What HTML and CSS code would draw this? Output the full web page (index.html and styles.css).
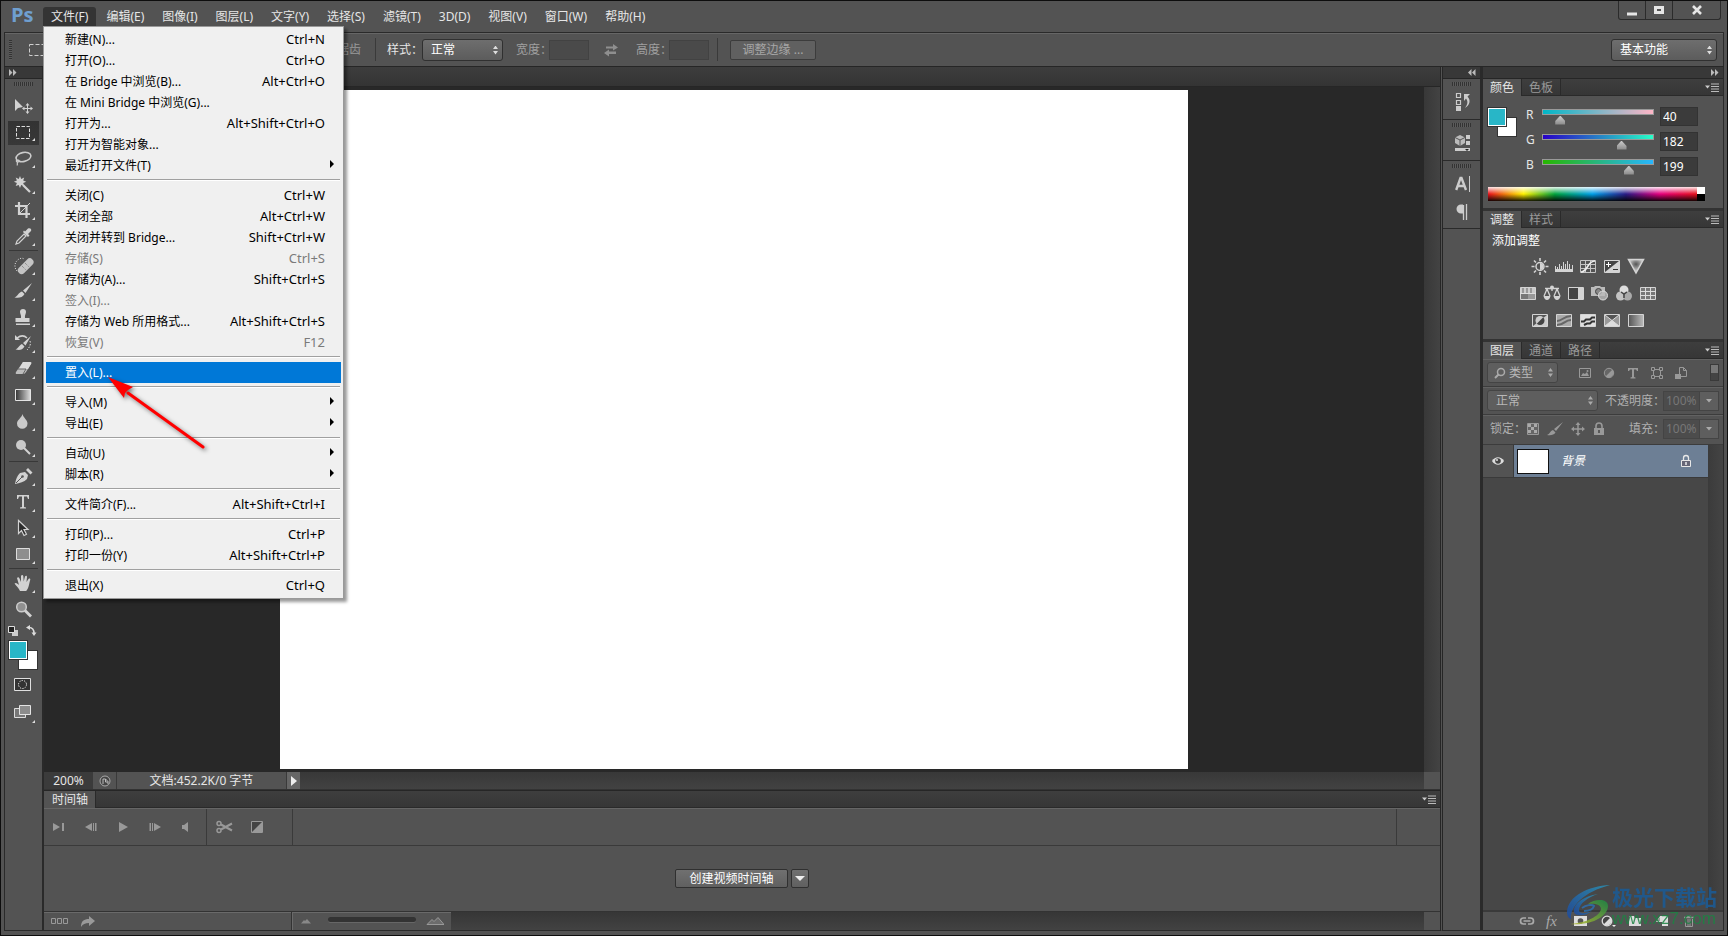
FILE: index.html
```html
<!DOCTYPE html>
<html lang="zh-CN">
<head>
<meta charset="utf-8">
<title>Ps</title>
<link rel="stylesheet" href="styles.css">
</head>
<body>
<div class="app">
  <header class="menubar">
    <span class="logo">Ps</span>
    <nav class="menus">
      <button class="menu-btn open">文件(F)</button>
      <button class="menu-btn">编辑(E)</button>
      <button class="menu-btn">图像(I)</button>
      <button class="menu-btn">图层(L)</button>
      <button class="menu-btn">文字(Y)</button>
      <button class="menu-btn">选择(S)</button>
      <button class="menu-btn">滤镜(T)</button>
      <button class="menu-btn">3D(D)</button>
      <button class="menu-btn">视图(V)</button>
      <button class="menu-btn">窗口(W)</button>
      <button class="menu-btn">帮助(H)</button>
    </nav>
    <div class="win-btns">
      <button class="win-btn" aria-label="最小化"><svg width="12" height="12"><path d="M1 8.500h10v3H1z" fill="#e6e6e6"/></svg></button>
      <button class="win-btn" aria-label="最大化"><svg width="12" height="12"><path d="M2.500 3.500h7v5h-7z" fill="none" stroke="#e6e6e6" stroke-width="3"/></svg></button>
      <button class="win-btn close" aria-label="关闭"><svg width="12" height="12"><path d="M2 2l8 8M10 2l-8 8" stroke="#e6e6e6" stroke-width="2.600"/></svg></button>
    </div>
  </header>

  <section class="options">
    <div class="opt-left">
      <i class="grip-v"></i>
      <svg width="18" height="14"><path d="M1.500 1.500h14v11h-14z" fill="none" stroke="#d0d0d0" stroke-dasharray="4 2"/></svg>
      <span class="opt-end">锯齿</span>
    </div>
    <i class="vline"></i>
    <label for="style">样式：</label>
    <span class="sel sel-style"><select id="style"><option>正常</option></select></span>
    <label class="dim" for="w">宽度：</label>
    <input class="num" id="w" disabled>
    <svg class="swap" width="16" height="14"><path d="M3 3.500h7V1l5 3.500-5 3V5.500H3zM13 8.500H6V6.500l-5 3.500 5 3.500v-2.500h7z" fill="#8f8f8f"/></svg>
    <label class="dim" for="h">高度：</label>
    <input class="num" id="h" disabled>
    <i class="vline"></i>
    <button class="refine" disabled>调整边缘 ...</button>
    <span class="sel sel-work"><select aria-label="工作区"><option>基本功能</option></select></span>
  </section>

  <div class="main">
    <aside class="tools">
      <div class="strip-head left"><svg width="8" height="7"><path d="M0 0l3.500 3.500L0 7zM4 0l3.500 3.500L4 7z" fill="#bbb"/></svg></div>
      <i class="grip-h"></i>
      <button class="tool" aria-label="移动"><svg viewBox="0 0 38 26"><path d="M10 6v12l3-3 5-1z" fill="#d2d2d2"/><path d="M22.500 11v9M18 15.500h9" stroke="#d2d2d2"/><path d="M22.500 10l2 2.500h-4zM22.500 21l2-2.500h-4zM17 15.500l2.500-2v4zM28 15.500l-2.500-2v4z" fill="#d2d2d2"/></svg></button>
      <button class="tool on" aria-label="矩形选框"><svg viewBox="0 0 38 26"><path d="M11.500 7.500h13v12h-13z" fill="none" stroke="#ddd" stroke-dasharray="3.500 1.500"/><path d="M30 19v3h-3z" fill="#ddd"/></svg></button>
      <button class="tool" aria-label="套索"><svg viewBox="0 0 38 26"><ellipse cx="18.500" cy="12" rx="7.500" ry="4.500" transform="rotate(-12 18.500 12)" fill="none" stroke="#ccc" stroke-width="1.600"/><path d="M12 14.500c-2 2 1 3.500 2 2s-2-2-2-.5 1 3 0 4.500" fill="none" stroke="#ccc" stroke-width="1.200"/><path d="M30 20v3h-3z" fill="#ddd"/></svg></button>
      <button class="tool" aria-label="魔棒"><svg viewBox="0 0 38 26"><path d="M15 5l1.200 3 3-1.500-1 3 3 1.200-3 1.200 1 3-3-1-1.200 3-1.300-3-3 1 1.200-3-3-1.200 3-1.200-1.200-3 3 1.500z" fill="#d2d2d2"/><path d="M18 14l7 7" stroke="#d2d2d2" stroke-width="2.200"/><path d="M30 20v3h-3z" fill="#ddd"/></svg></button>
      <button class="tool" aria-label="裁剪"><svg viewBox="0 0 38 26"><path d="M14 5v12h11M10 9h11.500v12" fill="none" stroke="#d2d2d2" stroke-width="2.200"/><path d="M14 17L25 6" stroke="#d2d2d2"/><path d="M30 20v3h-3z" fill="#ddd"/></svg></button>
      <button class="tool" aria-label="吸管"><svg viewBox="0 0 38 26"><path d="M11 21l1-3 7-7 2 2-7 7z" fill="none" stroke="#d2d2d2" stroke-width="1.200"/><path d="M18 9l5 5 1.500-1.500L23 11l3-3c1-2-1-3.500-3-2.500l-3 3-1-1z" fill="#d2d2d2"/><path d="M30 20v3h-3z" fill="#ddd"/></svg></button>
      <hr>
      <button class="tool" aria-label="修复画笔"><svg viewBox="0 0 38 26"><path d="M12 19c-3-3-3-9 2-12 2-1 4-1 5 0" fill="none" stroke="#ddd" stroke-dasharray="1 1.500"/><rect x="11" y="10.500" width="19" height="7.500" rx="3.700" transform="rotate(-45 20.500 14)" fill="#c4c4c4"/><path d="M17 14l4 4M20 11l4 4" stroke="#777" stroke-dasharray="1 1"/><path d="M30 20v3h-3z" fill="#ddd"/></svg></button>
      <button class="tool" aria-label="画笔"><svg viewBox="0 0 38 26"><path d="M27 5l-9 7.500 2.500 2.500zM17 13.500l2.500 2.500c-2 4-6 4-10 3.500 3-1 4-5 7.500-6z" fill="#d2d2d2"/><path d="M30 20v3h-3z" fill="#ddd"/></svg></button>
      <button class="tool" aria-label="图章"><svg viewBox="0 0 38 26"><path d="M15 8a3 3 0 0 1 6 0c0 2-1.500 3-1 6h4.500v4h-14v-4H16c.5-3-1-4-1-6zM11 19.500h14v1.500H11z" fill="#d2d2d2"/><path d="M30 20v3h-3z" fill="#ddd"/></svg></button>
      <button class="tool" aria-label="历史画笔"><svg viewBox="0 0 38 26"><path d="M26 6l-8 7 2.500 2.500zM17 14l2.500 2.500c-2 3.500-5 4-9 3 3-1 3.500-4.500 6.500-5.500z" fill="#d2d2d2"/><path d="M12 8c4-3 7-3 10 0" fill="none" stroke="#d2d2d2" stroke-width="1.500"/><path d="M10 5v5h5z" fill="#d2d2d2"/><path d="M25 11c1 3 0 6-3 9" fill="none" stroke="#ddd" stroke-dasharray="1.500 1.500"/><path d="M30 20v3h-3z" fill="#ddd"/></svg></button>
      <button class="tool" aria-label="橡皮擦"><svg viewBox="0 0 38 26"><path d="M18 6h7q2 0 1 2l-5 8q-1 2-3 2h-6q-2 0-1-2z" fill="#bdbdbd"/><path d="M18 6h7q2 0 1 2l-3 5h-9z" fill="#dcdcdc"/><path d="M13 13h8l-3 5" fill="none" stroke="#666"/><path d="M30 20v3h-3z" fill="#ddd"/></svg></button>
      <button class="tool" aria-label="渐变"><svg viewBox="0 0 38 26"><defs><linearGradient id="g1"><stop stop-color="#333"/><stop offset="1" stop-color="#ddd"/></linearGradient></defs><path d="M10.500 7.500h15v11h-15z" fill="url(#g1)" stroke="#e4e4e4"/><path d="M30 20v3h-3z" fill="#ddd"/></svg></button>
      <button class="tool" aria-label="模糊"><svg viewBox="0 0 38 26"><path d="M17.500 6c1 4 5 6 5 9.500a5 5 0 0 1-10.500 0c0-3.500 4.500-5.500 5.500-9.500z" fill="#cacaca"/><path d="M30 20v3h-3z" fill="#ddd"/></svg></button>
      <button class="tool" aria-label="减淡"><svg viewBox="0 0 38 26"><circle cx="16" cy="11" r="5" fill="#cacaca"/><path d="M19 14l6 6" stroke="#d2d2d2" stroke-width="2"/><path d="M30 20v3h-3z" fill="#ddd"/></svg></button>
      <hr>
      <button class="tool" aria-label="钢笔"><svg viewBox="0 0 38 26"><path d="M10 21c1-5 2-8 5-11l5-1 3 3-1 4c-3 3-7 4-12 5zM21 7l2-2 4.500 4.500-2 2z" fill="#d2d2d2"/><path d="M11 20l6-6" stroke="#555"/><circle cx="17.500" cy="13.500" r="1.300" fill="#555"/><path d="M30 20v3h-3z" fill="#ddd"/></svg></button>
      <button class="tool" aria-label="文字"><svg viewBox="0 0 38 26"><path d="M12 6h12v4h-1l-1-2.500h-3V18l2 .5v1h-6v-1l2-.5V7.500h-3L13 10h-1z" fill="#d2d2d2"/><path d="M30 20v3h-3z" fill="#ddd"/></svg></button>
      <button class="tool" aria-label="路径选择"><svg viewBox="0 0 38 26"><path d="M13.500 5.500v13l3-3 2.500 5 2.500-1.200-2.500-4.800h4z" fill="#2c2c2c" stroke="#d2d2d2" stroke-width="1.200"/><path d="M30 20v3h-3z" fill="#ddd"/></svg></button>
      <button class="tool" aria-label="矩形"><svg viewBox="0 0 38 26"><path d="M11.500 7.500h13v11h-13z" fill="#8e8e8e" stroke="#ddd"/><path d="M30 20v3h-3z" fill="#ddd"/></svg></button>
      <hr>
      <button class="tool" aria-label="抓手"><svg viewBox="0 0 38 26"><path d="M15 21c-1-3-4-5-5.500-7.500 1.500-1.500 3 0 4.500 1.500L12 8c1-1.500 2-.8 2.500.5L16 12V6c.5-1.500 2-1.500 2.300 0l.4 5.500 1.300-5c.7-1.300 2-1 2 .5L21.500 12l2-3c1-1 2.200-.3 1.700 1-1 3-1.200 8-4 11z" fill="#d2d2d2"/><path d="M30 20v3h-3z" fill="#ddd"/></svg></button>
      <button class="tool" aria-label="缩放"><svg viewBox="0 0 38 26"><circle cx="16.500" cy="11" r="4.800" fill="#909090" stroke="#ccc" stroke-width="1.500"/><path d="M20 14.500l6 6" stroke="#d2d2d2" stroke-width="2.800"/></svg></button>
      <svg class="mini" width="38" height="16"><path d="M7 6h6v6H7z" fill="#ccc"/><path d="M3.500 2.500h6v6h-6z" fill="#222" stroke="#ddd"/><path d="M24 3.500c4 0 5 2 5 6" fill="none" stroke="#ddd" stroke-width="1.500"/><path d="M25 1v5l-4-2.500zM26.500 8.500h5L29 12z" fill="#ddd"/></svg>
      <div class="swatches"><button class="bgc" aria-label="背景色"></button><button class="fgc" aria-label="前景色"></button></div>
      <button class="tool quick" aria-label="快速蒙版"><svg viewBox="0 0 38 26"><path d="M9.500 6.500h16v12h-16z" fill="#333" stroke="#e0e0e0"/><circle cx="17.500" cy="12.500" r="4" fill="none" stroke="#fff" stroke-dasharray="1.200 1.300"/></svg></button>
      <button class="tool" aria-label="屏幕模式"><svg viewBox="0 0 38 26"><path d="M9.500 8.500h11v9h-11z" fill="#777" stroke="#ddd"/><path d="M14.500 5.500h11v9h-11z" fill="#8c8c8c" stroke="#e4e4e4"/><path d="M30 20v3h-3z" fill="#ddd"/></svg></button>
    </aside>

    <main class="doc">
      <div class="doc-tabs"></div>
      <div class="stage">
        <div class="pasteboard"><div class="canvas"></div></div>
        <div class="vscroll"></div>
      </div>
      <div class="status">
        <span class="zoom">200%</span>
        <span class="st-icon"><svg width="12" height="12"><circle cx="6" cy="6" r="5" fill="#444" stroke="#aaa"/><path d="M4 9V4h2.500L9 6.500V9M6.500 4v3H9" fill="none" stroke="#bbb"/></svg></span>
        <span class="info">文档:452.2K/0 字节</span>
        <button class="st-play" aria-label="选项"><svg width="8" height="10"><path d="M1 0l6 5-6 5z" fill="#eee"/></svg></button>
        <span class="hscroll"></span>
        <span class="corner"></span>
      </div>
      <section class="timeline">
        <div class="tabs"><button class="tab on">时间轴</button><svg class="pmenu" width="14" height="9"><path d="M0 2.500h5l-2.500 3z" fill="#ccc"/><path d="M6 1h8M6 3.500h8M6 6h8M6 8.500h8" stroke="#bbb"/></svg></div>
        <div class="tl-bar">
          <div class="tl-play">
            <button aria-label="首帧"><svg width="14" height="12"><path d="M1 2l7 4-7 4zM10 2h2v8h-2z"/></svg></button>
            <button aria-label="上一帧"><svg width="14" height="12"><path d="M8 2L1 6l7 4zM9 2h1v8H9zM11 2h1.500v8H11z"/></svg></button>
            <button aria-label="播放"><svg width="14" height="12"><path d="M3 1l9 5-9 5z"/></svg></button>
            <button aria-label="下一帧"><svg width="14" height="12"><path d="M6 2l7 4-7 4zM4 2h1v8H4zM1.500 2H3v8H1.500z"/></svg></button>
            <button aria-label="静音"><svg width="14" height="12"><path d="M2 4h2l4-3v10L4 8H2z"/></svg></button>
          </div>
          <div class="tl-cut">
            <button aria-label="拆分"><svg width="18" height="14"><circle cx="4" cy="3.500" r="2" fill="none" stroke="#999" stroke-width="1.500"/><circle cx="4" cy="10.500" r="2" fill="none" stroke="#999" stroke-width="1.500"/><path d="M6 4.500l11 6M6 9.500l11-6" stroke="#999" stroke-width="2"/></svg></button>
            <button aria-label="过渡"><svg width="14" height="14"><path d="M1.500 1.500h11v11h-11z" fill="#444" stroke="#999"/><path d="M12 2v10H2z"/></svg></button>
          </div>
          <div class="tl-space"></div>
          <div class="tl-end"></div>
        </div>
        <div class="tl-body"><button class="create">创建视频时间轴</button><button class="create arrow" aria-label="更多"><svg width="10" height="6"><path d="M0 0h10L5 5z" fill="#eee"/></svg></button></div>
        <div class="tl-foot">
          <div class="tf-left"><svg width="18" height="8"><path d="M.5 1.500h4v5h-4zM6.500 1.500h4v5h-4zM12.500 1.500h4v5h-4z" fill="none" stroke="#999"/></svg><svg width="14" height="12"><path d="M0 12c0-6 3-8 8-8V1l6 5-6 5V8C4 8 2 9 0 12z" fill="#999"/></svg></div>
          <div class="tf-zoom"><svg width="10" height="6"><path d="M0 5.500L3 2l1 1 2-2 4 4.500z" fill="#888"/></svg><i class="tf-track"></i><svg width="18" height="8"><path d="M1 7.500l5-5 2 2 4-4 6 7z" fill="#6c6c6c" stroke="#999"/></svg></div>
          <div class="tf-scroll"></div>
          <div class="tf-corner"></div>
        </div>
      </section>
    </main>

    <aside class="dock">
      <div class="strip-head right"><svg width="8" height="7"><path d="M3.500 0L0 3.500 3.500 7zM7.500 0L4 3.500 7.500 7z" fill="#bbb"/></svg></div>
      <div class="dock-group"><i class="grip-h"></i><button aria-label="历史记录"><svg width="18" height="20"><path d="M2.500 1.500h4v4h-4zM2.500 8.500h4v4h-4z" fill="none" stroke="#ccc" stroke-width="1.200"/><path d="M2 14h5v5H2z" fill="#ccc"/><path d="M10 2h6l-2.500 2.500C17 8 16 13 11 16c3-4 3-7 1-9.500L10 9z" fill="#ccc"/></svg></button></div>
      <div class="dock-group"><i class="grip-h"></i><button aria-label="属性"><svg width="18" height="20"><path d="M6 2l5 2.500v5.500L6 13l-5-3V4.500z" fill="#bbb"/><path d="M1 4.500L6 7l5-2.500M6 7v6" fill="none" stroke="#555"/><path d="M12 2h4v4h-4zM12 8h4v4h-4zM1 15h15v3H1z" fill="#ccc"/><path d="M11 16h4l-2 2z" fill="#222"/></svg></button></div>
      <div class="dock-group two"><i class="grip-h"></i><button aria-label="字符"><svg width="18" height="20"><path d="M2.200 16L6.500 4h1L12 16M4 12h6" fill="none" stroke="#ccc" stroke-width="2.400"/><path d="M15.500 2v16" stroke="#ccc"/></svg></button><button aria-label="段落"><svg width="18" height="20"><path d="M13 2.500H7a4.500 4.500 0 0 0 0 9h2V2.500" fill="#ccc"/><path d="M9.500 3v15M12.500 2v16" stroke="#ccc" stroke-width="1.300"/></svg></button></div>
    </aside>

    <aside class="panels">
      <div class="strip-head right"><svg width="8" height="7"><path d="M0 0l3.500 3.500L0 7zM4 0l3.500 3.500L4 7z" fill="#bbb"/></svg></div>
      <section class="panel">
        <div class="tabs"><button class="tab on">颜色</button><button class="tab">色板</button><svg class="pmenu" width="14" height="9"><path d="M0 2.500h5l-2.500 3z" fill="#ccc"/><path d="M6 1h8M6 3.500h8M6 6h8M6 8.500h8" stroke="#bbb"/></svg></div>
        <div class="color">
          <div class="color-top">
            <div class="swatches"><button class="bgc" aria-label="背景色"></button><button class="fgc" aria-label="前景色"></button></div>
            <div class="channels">
              <div class="ch"><label for="r">R</label><span class="bar bar-r"><input type="range" aria-label="R" min="0" max="255" value="40"></span><input class="val" id="r" value="40"></div>
              <div class="ch"><label for="g">G</label><span class="bar bar-g"><input type="range" aria-label="G" min="0" max="255" value="182"></span><input class="val" id="g" value="182"></div>
              <div class="ch"><label for="b">B</label><span class="bar bar-b"><input type="range" aria-label="B" min="0" max="255" value="199"></span><input class="val" id="b" value="199"></div>
            </div>
          </div>
          <div class="spectrum"><i class="hues"></i><i class="bw"></i></div>
        </div>
      </section>
      <section class="panel">
        <div class="tabs"><button class="tab on">调整</button><button class="tab">样式</button><svg class="pmenu" width="14" height="9"><path d="M0 2.500h5l-2.500 3z" fill="#ccc"/><path d="M6 1h8M6 3.500h8M6 6h8M6 8.500h8" stroke="#bbb"/></svg></div>
        <div class="adjust">
          <p>添加调整</p>
          <div class="adj-row">
            <svg viewBox="0 0 24 27"><circle cx="12" cy="13.500" r="4" fill="none" stroke="#d4d4d4" stroke-width="1.500"/><path d="M12 10a3.500 3.500 0 0 1 0 7z" fill="#d4d4d4"/><path d="M12 5v3M12 19v3M3.500 13.500h3M17.500 13.500h3M6 7.500l2 2M18 7.500l-2 2M6 19.500l2-2M18 19.500l-2-2" stroke="#d4d4d4" stroke-width="1.600"/></svg>
            <svg viewBox="0 0 24 27"><path d="M3 16h18v3H3z" fill="#d4d4d4"/><path d="M3.500 17v-4M5.500 17v-3M7.500 17v-6M9.500 17v-4M11.500 17V9M13.500 17v-6M15.500 17V8M17.500 17v-6M20.500 17v-5" stroke="#d4d4d4"/></svg>
            <svg viewBox="0 0 24 27"><path d="M4.500 7.500h15v12h-15zM9.500 7v13M14.500 7v13M4 11.500h16M4 15.500h16" fill="none" stroke="#c4c4c4"/><path d="M5 19c7 0 6-11 14-11" fill="none" stroke="#eee" stroke-width="1.600"/></svg>
            <svg viewBox="0 0 24 27"><path d="M4.500 7.500h15v12h-15z" fill="#444" stroke="#d4d4d4"/><path d="M19 8v11H5z" fill="#d4d4d4"/><path d="M6 11.500h5M8.500 9v5" stroke="#fff"/><path d="M13 16.500h5" stroke="#333"/></svg>
            <svg viewBox="0 0 24 27"><defs><radialGradient id="g3" cx=".5" cy=".35"><stop stop-color="#555"/><stop offset="1" stop-color="#ccc"/></radialGradient></defs><path d="M4.500 6.500h15L12 20z" fill="url(#g3)" stroke="#d4d4d4" stroke-width="1.500"/></svg>
          </div>
          <div class="adj-row">
            <svg viewBox="0 0 24 27"><path d="M4.500 7.500h15v12h-15z" fill="#ccc" stroke="#d4d4d4"/><path d="M7 8v5M11 8v5M15 8v5" stroke="#999" stroke-width="2"/><path d="M5 14h14v5H5z" fill="#777"/><path d="M12 14h7v5h-7z" fill="#999"/><path d="M4 13.500h16" stroke="#ddd"/></svg>
            <svg viewBox="0 0 24 27"><path d="M5 8.500h14M12 6v5M7 9l-3 7M7 9l3 7M17 9l-3 7M17 9l3 7" fill="none" stroke="#d4d4d4" stroke-width="1.300"/><path d="M3.500 16h7q-1 4-3.500 4t-3.500-4zM13.500 16h7q-1 4-3.500 4t-3.500-4z" fill="#d4d4d4"/><circle cx="12" cy="7.500" r="2" fill="#d4d4d4"/></svg>
            <svg viewBox="0 0 24 27"><path d="M4.500 7.500h15v12h-15z" fill="#444" stroke="#d4d4d4"/><path d="M14 8h5v11h-5z" fill="#d4d4d4"/></svg>
            <svg viewBox="0 0 24 27"><path d="M3 7h3l1-1h5l1 1h4v9H3z" fill="#bbb"/><circle cx="10.500" cy="11.500" r="3" fill="#888" stroke="#444"/><circle cx="15" cy="15.500" r="4.500" fill="#bbb" fill-opacity=".8" stroke="#ddd"/></svg>
            <svg viewBox="0 0 24 27"><circle cx="12" cy="10" r="4.500" fill="#ddd"/><circle cx="8.500" cy="16" r="4.500" fill="#c4c4c4"/><circle cx="15.500" cy="16" r="4.500" fill="#aaa"/><path d="M9 12l3 2 3-2M12 14v4" fill="none" stroke="#444" stroke-width="1.500"/></svg>
            <svg viewBox="0 0 24 27"><path d="M4.500 7.500h15v12h-15z" fill="#777" stroke="#d4d4d4"/><path d="M9.500 7v13M14.500 7v13M4 11.500h16M4 15.500h16" stroke="#ddd"/></svg>
          </div>
          <div class="adj-row">
            <svg viewBox="0 0 24 27"><path d="M4.500 7.500h15v12h-15z" fill="#555" stroke="#d4d4d4"/><path d="M19 8v11H5z" fill="#ccc"/><circle cx="12" cy="13.500" r="4.500" fill="#ccc"/><path d="M15.200 10.300a4.500 4.500 0 0 1-6.400 6.400z" fill="#444"/></svg>
            <svg viewBox="0 0 24 27"><path d="M4.500 7.500h15v12h-15z" fill="#aaa" stroke="#d4d4d4"/><path d="M5 14c6 0 6-5 14-5M5 18c8 0 7-5 14-5" fill="none" stroke="#666" stroke-width="2"/></svg>
            <svg viewBox="0 0 24 27"><path d="M4.500 7.500h15v12h-15z" fill="#e0e0e0" stroke="#d4d4d4"/><path d="M5 14.500h3l2-2h4l2-2h3M8 18l3-1.500h3l2-2h3" fill="none" stroke="#333" stroke-width="2"/></svg>
            <svg viewBox="0 0 24 27"><path d="M4.500 7.500h15v12h-15z" fill="#999" stroke="#d4d4d4"/><path d="M5 8h14l-7 5.500z" fill="#555"/><path d="M5 19h14l-7-5.500z" fill="#ddd"/><path d="M5 8l14 11M19 8L5 19" stroke="#ddd"/></svg>
            <svg viewBox="0 0 24 27"><defs><linearGradient id="g2"><stop stop-color="#555"/><stop offset="1" stop-color="#bbb"/></linearGradient></defs><path d="M4.500 7.500h15v12h-15z" fill="url(#g2)" stroke="#d4d4d4"/></svg>
          </div>
        </div>
      </section>
      <section class="panel layers">
        <div class="tabs"><button class="tab on">图层</button><button class="tab">通道</button><button class="tab">路径</button><svg class="pmenu" width="14" height="9"><path d="M0 2.500h5l-2.500 3z" fill="#ccc"/><path d="M6 1h8M6 3.500h8M6 6h8M6 8.500h8" stroke="#bbb"/></svg></div>
        <div class="lrow filter">
          <span class="sel sel-kind"><svg class="glass" width="12" height="12"><circle cx="7" cy="5" r="3.500" fill="none" stroke="#aaa" stroke-width="1.500"/><path d="M4.500 7.500L1 11" stroke="#aaa" stroke-width="2"/></svg><select aria-label="筛选"><option>类型</option></select></span>
          <div class="kinds">
            <svg width="14" height="14"><path d="M1.500 2.500h11v9h-11z" fill="none" stroke="#999"/><path d="M3 10l2-3 2 1 2-2 2 4z" fill="#999"/><circle cx="9.500" cy="5" r="1" fill="#999"/></svg>
            <svg width="14" height="14"><circle cx="7" cy="7" r="4.700" fill="#666" stroke="#999"/><path d="M10.500 3.500A5 5 0 0 1 3.500 10.500z" fill="#999"/></svg>
            <svg width="14" height="14"><path d="M2 2h10v3h-1l-1-1.500H8V11l1.500.500v1h-5v-1L6 11V3.500H4L3 5H2z" fill="#999"/></svg>
            <svg width="14" height="14"><path d="M3.500 3.500h7v7h-7z" fill="none" stroke="#999"/><path d="M1.500 1.500h3v3h-3zM9.500 1.500h3v3h-3zM1.500 9.500h3v3h-3zM9.500 9.500h3v3h-3z" fill="#535353" stroke="#999"/></svg>
            <svg width="14" height="14"><path d="M5.500 1.500h4l3 3v6h-7zM9.500 1.500v3h3" fill="none" stroke="#999"/><path d="M1 8h6v5H1z" fill="#999"/></svg>
          </div>
          <i class="toggle"></i>
        </div>
        <div class="lrow">
          <span class="sel sel-blend"><select aria-label="混合模式"><option>正常</option></select></span>
          <label for="op">不透明度：</label>
          <span class="pct"><input id="op" value="100%"><button aria-label="不透明度"><svg width="6" height="4"><path d="M0 0h6L3 3.500z" fill="#aaa"/></svg></button></span>
        </div>
        <div class="lrow lock">
          <span>锁定：</span>
          <div class="locks">
            <svg width="14" height="14"><path d="M1.500 1.500h11v11h-11z" fill="#666" stroke="#999"/><path d="M2 2h3v3H2zM8 2h3v3H8zM5 5h3v3H5zM2 8h3v3H2zM8 8h3v3H8z" fill="#aaa"/></svg>
            <svg width="17" height="14"><path d="M16 0L7 7l2 2zM6 8l2.500 2.500C7 13 4 13.500 0 13c3-1 3-4 6-5z" fill="#999"/></svg>
            <svg width="14" height="14"><path d="M7 2v10M2 7h10" stroke="#999" stroke-width="1.500"/><path d="M7 0l2.500 3h-5zM7 14l2.500-3h-5zM0 7l3-2.500v5zM14 7l-3-2.500v5z" fill="#999"/></svg>
            <svg width="14" height="14"><path d="M2 6h10v7H2z" fill="#999"/><path d="M4 6V4a3 3 0 0 1 6 0v2" fill="none" stroke="#999" stroke-width="1.600"/><path d="M7 8v3" stroke="#444" stroke-width="1.500"/></svg>
          </div>
          <label for="fill">填充：</label>
          <span class="pct"><input id="fill" value="100%"><button aria-label="填充"><svg width="6" height="4"><path d="M0 0h6L3 3.500z" fill="#aaa"/></svg></button></span>
        </div>
        <div class="list">
          <div class="items">
            <div class="layer">
              <span class="eye"><svg width="14" height="12"><path d="M1 6c3-5 9-5 12 0-3 5-9 5-12 0z" fill="#ddd"/><circle cx="7" cy="6" r="2.800" fill="#444"/><circle cx="6" cy="5" r="1" fill="#ddd"/></svg></span>
              <div class="layer-main"><span class="thumb"></span><em>背景</em><svg width="12" height="14"><path d="M1.500 6.500h9v6h-9z" fill="#667" stroke="#e8e8e8"/><path d="M3.500 6V4a2.500 2.500 0 0 1 5 0v2" fill="none" stroke="#e8e8e8" stroke-width="1.300"/><path d="M6 8v3" stroke="#fff" stroke-width="1.300"/></svg></div>
            </div>
          </div>
          <div class="lscroll"></div>
        </div>
        <div class="lfoot">
          <svg width="16" height="14"><path d="M7 4H4.500a3 3 0 0 0 0 6H7M9 4h2.500a3 3 0 0 1 0 6H9M4.500 7h7" fill="none" stroke="#aaa" stroke-width="1.700"/></svg>
          <span class="fx">fx</span>
          <svg width="16" height="14"><path d="M1 2h13v10H1z" fill="#ddd"/><circle cx="7.500" cy="7" r="2.800" fill="#555"/></svg>
          <svg width="16" height="14"><circle cx="7" cy="7" r="4.800" fill="#444" stroke="#ddd" stroke-width="1.300"/><path d="M10.500 3.500a5 5 0 0 1-7 7z" fill="#ddd"/><path d="M12 11h4l-2 2z" fill="#eee"/></svg>
          <svg width="16" height="14"><path d="M2 2h5l1 2h6v8H2z" fill="#ddd"/></svg>
          <svg width="16" height="14"><path d="M6 2h8v10H8V8H2z" fill="#ddd"/><path d="M2 7l4-4v4z" fill="#999"/></svg>
          <svg width="16" height="14"><path d="M3 3.500h10M6 2.500h4" stroke="#999" stroke-width="1.500"/><path d="M4.500 5v7.500h7V5M7 5v7M9 5v7" fill="none" stroke="#999"/></svg>
        </div>
      </section>
    </aside>
  </div>

  <div class="menu">
    <button class="mi">新建(N)...<kbd>Ctrl+N</kbd></button>
    <button class="mi">打开(O)...<kbd>Ctrl+O</kbd></button>
    <button class="mi">在 Bridge 中浏览(B)...<kbd>Alt+Ctrl+O</kbd></button>
    <button class="mi">在 Mini Bridge 中浏览(G)...</button>
    <button class="mi">打开为...<kbd>Alt+Shift+Ctrl+O</kbd></button>
    <button class="mi">打开为智能对象...</button>
    <button class="mi sub">最近打开文件(T)</button>
    <hr>
    <button class="mi">关闭(C)<kbd>Ctrl+W</kbd></button>
    <button class="mi">关闭全部<kbd>Alt+Ctrl+W</kbd></button>
    <button class="mi">关闭并转到 Bridge...<kbd>Shift+Ctrl+W</kbd></button>
    <button class="mi" disabled>存储(S)<kbd>Ctrl+S</kbd></button>
    <button class="mi">存储为(A)...<kbd>Shift+Ctrl+S</kbd></button>
    <button class="mi" disabled>签入(I)...</button>
    <button class="mi">存储为 Web 所用格式...<kbd>Alt+Shift+Ctrl+S</kbd></button>
    <button class="mi" disabled>恢复(V)<kbd>F12</kbd></button>
    <hr>
    <button class="mi hot">置入(L)...</button>
    <hr>
    <button class="mi sub">导入(M)</button>
    <button class="mi sub">导出(E)</button>
    <hr>
    <button class="mi sub">自动(U)</button>
    <button class="mi sub">脚本(R)</button>
    <hr>
    <button class="mi">文件简介(F)...<kbd>Alt+Shift+Ctrl+I</kbd></button>
    <hr>
    <button class="mi">打印(P)...<kbd>Ctrl+P</kbd></button>
    <button class="mi">打印一份(Y)<kbd>Alt+Shift+Ctrl+P</kbd></button>
    <hr>
    <button class="mi">退出(X)<kbd>Ctrl+Q</kbd></button>
    <svg class="pointer" width="104" height="80"><path d="M20 16L95 70" stroke="#f00" stroke-width="3" stroke-linecap="round"/><path d="M0 0l25 10-5 3-3 3-1 5z" fill="#f00"/></svg>
  </div>

  <div class="mark">
    <svg width="46" height="44" viewBox="0 0 46 44"><defs><linearGradient id="m1" x1="1" y1="0" x2="0" y2="1"><stop stop-color="#2a93b8"/><stop offset="1" stop-color="#1d4aa0"/></linearGradient><linearGradient id="m2" x1="1" y1="0" x2="0" y2="1"><stop stop-color="#1d8a45"/><stop offset="1" stop-color="#b5b92c"/></linearGradient></defs><path d="M44 1C22 2 2 12 1 28c0 5 3 7 4 7C4 22 18 8 44 1z" fill="url(#m1)"/><path d="M32 10C18 12 7 20 8 28c1 5 12 4 18-1-7 3-13 3-13-1 0-6 9-13 19-16z" fill="url(#m1)"/><path d="M22 20c6-5 20-6 20 2 0 10-16 20-38 18 16-1 30-8 31-15 0-5-7-6-13-5z" fill="url(#m2)"/><path d="M16 24c4-3 10-4 12-2-1 3-5 5-10 5" fill="none" stroke="#2e6fb0" stroke-width="2"/></svg>
    <div class="mark-text"><b>极光下载站</b><span>www.xz7.com</span></div>
  </div>
</div>
</body>
</html>
```
FILE: styles.css
```css
* { box-sizing: border-box; }
body {
  margin: 0;
  background: #535353;
  color: #e6e6e6;
  font: 12px/16px "Noto Sans", "Noto Sans CJK SC", sans-serif;
}
button, input, select { font: inherit; color: inherit; margin: 0; }
button { padding: 0; border: 0; background: none; }
svg { display: block; flex: none; }
kbd { font: inherit; }

.app {
  position: relative;
  display: flex;
  flex-direction: column;
  min-height: 100vh;
  overflow: hidden;
  padding: 0 3px;
  border: 1px solid #0d0d0d;
}

/* menu bar */
.menubar { display: flex; height: 31px; }
.logo {
  width: 39px;
  padding-left: 7px;
  font: bold 20px/28px "Open Sans", sans-serif;
  color: #6f9fd0;
}
.menus { display: flex; align-items: flex-start; padding-top: 6px; }
.menu-btn { height: 20px; margin-right: 2px; padding: 0 8px; line-height: 18px; white-space: nowrap; }
.menu-btn.open { background: #343434; border-radius: 3px 3px 0 0; }
.win-btns { display: flex; margin: 0 3px 0 auto; height: 19px; border: solid #2b2b2b; border-width: 0 1px 1px; border-radius: 0 0 3px 3px; }
.win-btn { display: grid; place-items: center; width: 27px; border-right: 1px solid #2b2b2b; }
.win-btn.close { width: 47px; border: 0; }

/* options bar */
.options {
  display: flex;
  align-items: center;
  height: 34px;
  padding-right: 6px;
  border: solid #2a2a2a;
  border-width: 1px 1px 0;
  box-shadow: inset 0 1px #666;
  white-space: nowrap;
}
.opt-left { display: flex; align-items: center; width: 356px; padding-left: 4px; gap: 16px; }
.grip-v { width: 3px; height: 20px; background: repeating-linear-gradient(#333 0 1px, #5c5c5c 1px 2px); }
.opt-end { margin-left: auto; color: #999; }
.vline { width: 1px; height: 23px; margin: 0 11px 0 14px; background: #3a3a3a; }
.options label { width: 35px; }
.options .dim { width: 33px; margin-left: 13px; color: #a0a0a0; }
.num { width: 40px; height: 20px; border: 1px solid #424242; background: #4a4a4a; }
.swap { margin: 0 4px 0 14px; }
.num + .vline { margin: 0 12px 0 8px; }
.refine { width: 86px; height: 20px; border: 1px solid #3c3c3c; border-radius: 2px; background: #606060; color: #a6a6a6; line-height: 16px; }
.sel { position: relative; display: flex; height: 22px; }
.sel select {
  appearance: none;
  width: 100%;
  padding: 0 8px;
  border: 1px solid #303030;
  border-radius: 3px;
  background: linear-gradient(#6e6e6e, #5c5c5c);
  color: #fff;
  line-height: 18px;
}
.sel::after {
  content: "";
  position: absolute;
  right: 5px;
  top: 7px;
  width: 5px;
  height: 9px;
  background: #ddd;
  clip-path: polygon(50% 0, 100% 40%, 0 40%, 0 60%, 100% 60%, 50% 100%, 0 60%, 0 40%);
}
.sel-style { width: 81px; }
.sel-work { width: 106px; margin-left: auto; }

/* main row */
.main { display: flex; flex: 1; border-top: 1px solid #262626; padding-bottom: 4px; }
.strip-head { display: flex; align-items: center; width: 100%; height: 12px; padding: 0 4px; background: #383838; border-bottom: 1px solid #262626; }
.strip-head.right { justify-content: flex-end; }
.grip-h { display: block; width: 19px; height: 4px; background: repeating-linear-gradient(90deg, #333 0 1px, #5c5c5c 1px 2px); }

.tools { display: flex; flex-direction: column; align-items: center; width: 40px; border: solid #2a2a2a; border-width: 0 2px 1px 1px; }
.tools .grip-h { margin: 3px 0 7px; }
.tool { width: 37px; height: 26px; }
.tool svg { width: 38px; height: 26px; }
.tool.on { background: linear-gradient(#333, #383838) content-box; padding: 2px 3px 0; }
.tool.on svg { margin: -2px -3px 0; }
.tools hr { width: 29px; height: 1px; margin: 1px 0; border: 0; background: #383838; }
.mini { margin-top: 2px; }
.swatches { position: relative; width: 30px; height: 30px; }
.tools .swatches { margin-right: 2px; }
.swatches button { position: absolute; width: 20px; height: 20px; border: 1px solid #333; }
.bgc { right: 0; bottom: 0; background: #fff; }
.fgc { left: 0; top: 0; background: #28b6c7; box-shadow: inset 0 0 0 1px #fff; }
.quick { margin: 2px 0; }

/* document */
.doc { display: flex; flex: 1; flex-direction: column; min-width: 0; border-bottom: 1px solid #2a2a2a; }
.doc-tabs { height: 20px; background: linear-gradient(#3d3d3d, #343434); border-bottom: 1px solid #262626; }
.stage { display: flex; flex: 1; }
.pasteboard { display: flex; flex: 1; justify-content: center; padding: 3px 0; background: #282828; }
.canvas { width: 908px; background: #fff; }
.vscroll { width: 16px; background: linear-gradient(90deg, #383838, #434343); }
.status { display: flex; height: 17px; background: #535353; }
.status > * { flex: none; display: flex; align-items: center; justify-content: center; }
.zoom { width: 49px; background: #3b3b3b; }
.st-icon { width: 24px; border-right: 1px solid #3a3a3a; }
.info { width: 170px; border-right: 1px solid #3a3a3a; }
.st-play { width: 13px; background: #666; }
.status .hscroll { flex: 1; background: linear-gradient(#383838, #424242); }
.corner { width: 16px; }

.tabs { display: flex; height: 17px; background: linear-gradient(#3e3e3e, #363636); box-shadow: inset 0 -1px #2a2a2a; }
.tab { padding: 0 7px; height: 17px; border-right: 1px solid #2a2a2a; color: #999; line-height: 15px; }
.tab.on { background: #535353; color: #e6e6e6; }
.pmenu { margin: 4px 4px 0 auto; }
.timeline { margin-top: 1px; border-top: 1px solid #262626; box-shadow: 0 -1px #333; }
.timeline .tab { padding: 0 7px 0 8px; }
.tl-bar { display: flex; height: 38px; border-top: 1px solid #666; border-bottom: 1px solid #3a3a3a; }
.tl-bar svg { fill: #999; }
.tl-play { display: flex; align-items: center; gap: 18px; width: 163px; padding-left: 8px; border-right: 1px solid #3a3a3a; }
.tl-cut { display: flex; align-items: center; gap: 17px; width: 86px; padding-left: 8px; border-right: 1px solid #3a3a3a; }
.tl-space { flex: 1; border-right: 1px solid #3a3a3a; }
.tl-end { width: 43px; }
.tl-body { display: flex; align-items: center; justify-content: center; gap: 3px; height: 65px; }
.create { width: 113px; height: 19px; border: 1px solid #303030; border-radius: 2px; background: linear-gradient(#707070, #606060); color: #fff; line-height: 15px; }
.create.arrow { display: grid; place-items: center; width: 18px; }
.tl-foot { display: flex; height: 19px; border-top: 1px solid #333; }
.tf-left { display: flex; align-items: center; gap: 12px; width: 248px; padding-left: 7px; box-shadow: inset 0 1px #6a6a6a; border-right: 1px solid #333; }
.tf-zoom { display: flex; align-items: center; justify-content: space-between; width: 159px; padding: 0 7px 0 9px; box-shadow: inset 1px 1px #6a6a6a; }
.tf-track { width: 88px; height: 5px; margin: 0 0 3px 6px; border-radius: 3px; background: #333; box-shadow: 0 1px #666; }
.tf-scroll { flex: 1; background: linear-gradient(#363636, #424242); }
.tf-corner { width: 16px; }

/* icon dock */
.dock { width: 41px; border: solid #2a2a2a; border-width: 0 1px 0 3px; border-left: 3px double #262626; border-bottom: 1px solid #2a2a2a; box-shadow: 2px 0 #2f2f2f; }
.dock-group { display: flex; flex-direction: column; align-items: center; height: 41px; padding-top: 3px; border-bottom: 1px solid #2a2a2a; }
.dock-group button { margin: 6px 0 0 2px; }
.dock-group.two { height: 68px; }
.dock-group.two button + button { margin-top: 8px; }

/* panels */
.panels { display: flex; flex-direction: column; width: 243px; border: solid #2a2a2a; border-width: 0 1px 1px 2px; }
.panel { border-bottom: 3px solid #333; }
.color { height: 112px; padding: 11px 0 0 4px; }
.color-top { display: flex; gap: 9px; height: 79px; }
.channels { display: flex; flex-direction: column; gap: 6px; }
.ch { display: flex; height: 19px; }
.ch label { width: 16px; line-height: 16px; }
.bar { width: 112px; height: 6px; margin-top: 2px; border: 1px solid #999; }
.bar-r { background: linear-gradient(90deg, #00b6c7, #ffb6c7); }
.bar-g { background: linear-gradient(90deg, #2800c7, #28ffc7); }
.bar-b { background: linear-gradient(90deg, #28b600, #28b6ff); }
.bar input { appearance: none; display: block; width: 120px; height: 10px; margin: 5px -5px 0; background: none; }
.bar input::-webkit-slider-thumb { appearance: none; width: 10px; height: 9px; background: linear-gradient(#ccc, #888); clip-path: polygon(50% 0, 100% 60%, 100% 100%, 0 100%, 0 60%); }
.val { width: 38px; height: 19px; margin-left: 6px; padding: 0 2px; border: 1px solid #333; background: #3b3b3b; color: #fff; }
.spectrum { display: flex; width: 219px; height: 16px; border: 1px solid #555; }
.hues { flex: 1; background: linear-gradient(rgba(255,255,255,.9), rgba(255,255,255,0) 50%, rgba(0,0,0,0) 50%, rgba(0,0,0,.9)), linear-gradient(90deg, #e8111c, #fff200 17%, #00a33d 32%, #00a0e9 50%, #2b1c86 66%, #e4007f 82%, #e8111c); }
.bw { width: 8px; background: linear-gradient(#fff 50%, #000 50%); }
.adjust { height: 111px; padding: 5px 30px 0 0; }
.adjust p { margin: 0 0 4px 9px; color: #fff; }
.adj-row { display: flex; justify-content: center; }
.adj-row svg { width: 24px; height: 27px; }

.layers { display: flex; flex: 1; flex-direction: column; border: 0; }
.lrow { display: flex; align-items: center; height: 28px; padding: 0 4px; border-bottom: 1px solid #3c3c3c; box-shadow: inset 0 1px #626262; color: #b0b0b0; white-space: nowrap; }
.lrow .sel { height: 21px; }
.lrow select { color: #b8b8b8; background: #5e5e5e; border-color: #444; line-height: 17px; }
.lrow .sel::after { background: #aaa; top: 6px; }
.sel-kind { width: 71px; }
.sel-kind select { padding-left: 21px; }
.glass { position: absolute; left: 7px; top: 5px; }
.sel-blend { width: 111px; }
.kinds { display: flex; flex: 1; gap: 10px; margin-left: 20px; }
.toggle { width: 9px; height: 17px; border: 1px solid #3a3a3a; background: linear-gradient(#777 50%, #444 50%); }
.lrow label { margin: 0 -2px 0 auto; }
.pct { display: flex; width: 56px; height: 20px; border: 1px solid #444; }
.pct input { width: 35px; padding: 0 2px; border: 0; background: #4c4c4c; color: #777; }
.pct button { display: grid; flex: 1; place-items: center; background: #5e5e5e; border-left: 1px solid #444; }
.lock { height: 30px; padding: 0 4px 2px 7px; }
.locks { display: flex; gap: 7px; align-items: center; }
.list { display: flex; flex: 1; background: #474747; }
.items { flex: 1; }
.lscroll { width: 15px; background: linear-gradient(90deg, #3b3b3b, #444); }
.layer { display: flex; height: 33px; border-bottom: 1px solid #3a3a3a; background: #535353; }
.eye { display: grid; place-items: center; width: 31px; border-right: 1px solid #3a3a3a; }
.layer-main { display: flex; flex: 1; align-items: center; padding: 0 16px 0 3px; background: #6d7f95; color: #fff; }
.thumb { width: 32px; height: 25px; border: 1px solid #111; background: #fff; }
.layer-main em { flex: 1; margin-left: 12px; }
.lfoot { display: flex; align-items: center; justify-content: center; gap: 11px; height: 20px; padding-left: 10px; border-top: 2px solid #3a3a3a; }
.fx { width: 16px; font: italic 15px/16px "Liberation Serif", serif; color: #aaa; }

/* open menu */
.menu {
  position: absolute;
  left: 42px;
  top: 25px;
  width: 301px;
  padding: 2px;
  border: 1px solid #999;
  background: #f0f0f0;
  box-shadow: 3px 3px 3px rgba(0, 0, 0, .4);
  color: #000;
}
.mi { position: relative; display: flex; justify-content: space-between; width: 100%; height: 21px; padding: 0 16px 0 19px; line-height: 21px; white-space: nowrap; }
.mi kbd { font-size: 13px; }
.mi:disabled { color: #7a7a7a; }
.mi.hot { background: #0078d7; color: #fff; }
.mi.sub::after { content: ""; margin-top: 5px; margin-right: -9px; width: 4px; height: 8px; background: #000; clip-path: polygon(0 0, 100% 50%, 0 100%); }
.menu hr { height: 1px; margin: 3px 1px 5px; border: 0; background: #a0a0a0; box-shadow: 0 1px #fff; }
.pointer { position: absolute; left: 64px; top: 350px; filter: drop-shadow(2px 2px 2px rgba(0, 0, 0, .5)); }

/* watermark */
.mark { position: absolute; right: 10px; bottom: 7px; display: flex; opacity: .85; }
.mark-text { display: flex; flex-direction: column; }
.mark b { font-size: 21px; line-height: 26px; color: #1a5c98; }
.mark span { font: 17px/18px "Liberation Sans", sans-serif; color: #1c8343; }
```
